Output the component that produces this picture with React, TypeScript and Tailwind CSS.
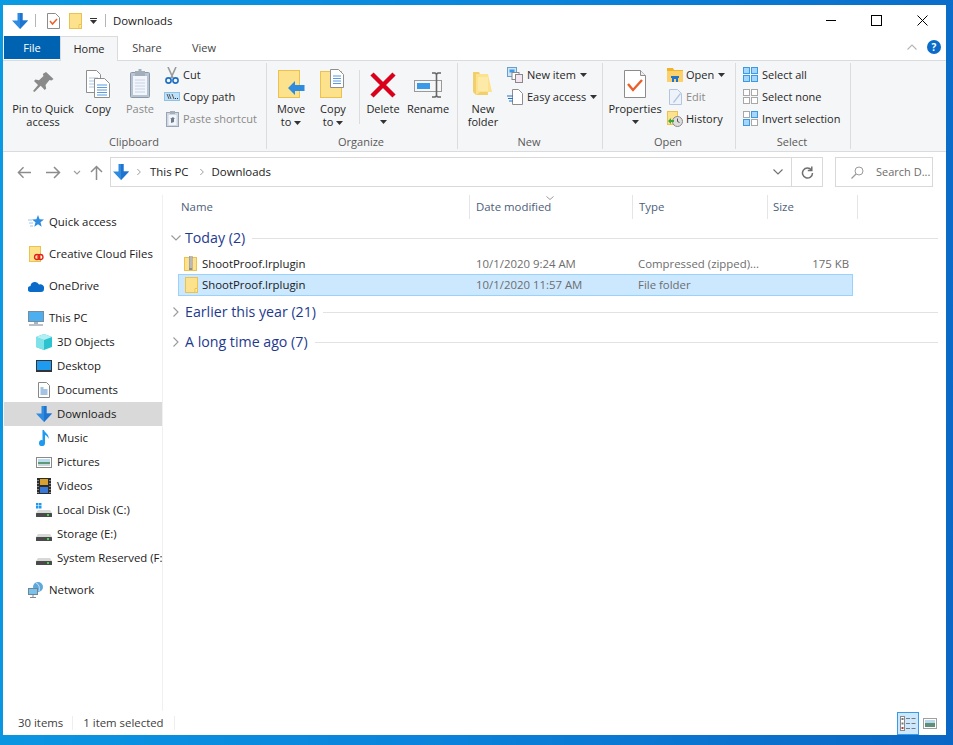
import React from "react";

type S = { s?: number };
const Svg = ({ w, h, children, className = "" }: { w: number; h: number; children: React.ReactNode; className?: string }) => (
  <svg width={w} height={h} viewBox={`0 0 ${w} ${h}`} className={`shrink-0 block ${className}`}>{children}</svg>
);

const DownArrow = ({ s = 16 }: S) => (
  <svg width={s} height={s} viewBox="0 0 16 16" className="shrink-0 block"><path d="M5.5 0h5v7.500H16L8 16 0 7.500h5.500z" fill="#2e8be0" /><path d="M8 0h2.500v7.500H16L8 16z" fill="#1f74cf" /></svg>
);
const Folder = ({ s = 16 }: S) => (
  <svg width={s} height={s} viewBox="0 0 16 16" className="shrink-0 block"><rect x="1.500" y=".5" width="12" height="15" fill="#fde28e" stroke="#ecc14e" /><path d="M11 15.500v-4h2.500" fill="#fff3c4" stroke="#ecc14e" /></svg>
);
const PropsSmall = () => (
  <Svg w={13} h={16}><path d="M.5.5h8l4 4v11H.5z" fill="#fff" stroke="#8c8c8c" /><path d="M3 8l2.500 3L10 6" fill="none" stroke="#e8602c" strokeWidth="1.500" /></Svg>
);
const Caret = ({ className = "" }: { className?: string }) => (
  <svg width="7" height="4" viewBox="0 0 7 4" className={`inline-block shrink-0 ${className}`}><path d="M0 0h7L3.500 4z" fill="#333" /></svg>
);
const Chevron = ({ dir = "down", c = "#9a9a9a", s = 12 }: { dir?: "down" | "right" | "up"; c?: string; s?: number }) => (
  <svg width={s} height={s} viewBox="0 0 12 12" className="shrink-0 block">
    <path d={dir === "down" ? "M1.500 3.500L6 8l4.500-4.500" : dir === "up" ? "M1.500 8.500L6 4l4.500 4.500" : "M3.500 1.500L8 6l-4.500 4.500"} fill="none" stroke={c} strokeWidth="1.100" />
  </svg>
);

/* ribbon big icons */
const PinIcon = () => (
  <Svg w={21} h={24} className="mb-[3px]"><path d="M13 1l7.500 7-2 1.500-2-.5-4 5 .7 3.500-1.500 1.500-4-4.200L1.500 21 0 20l5-6-4-4 1.500-1.500 3.500.7 4.500-4.200-.7-2z" fill="#8a8a8a" /></Svg>
);
const CopyIcon = () => (
  <Svg w={24} h={28}>
    <path d="M.5.5h10l4 4v18H.5z" fill="#fff" stroke="#8e8e8e" /><path d="M3 8h9M3 11h9M3 14h9M3 17h9" stroke="#a9c4e4" />
    <path d="M8.500 8.500h10l5 5v14h-15z" fill="#fff" stroke="#8e8e8e" /><path d="M11 15h10M11 17.500h10M11 20h10M11 22.500h10M11 25h10" stroke="#5b9ae0" strokeWidth="1.200" />
  </Svg>
);
const PasteIcon = () => (
  <Svg w={20} h={29}><rect x=".5" y="3.500" width="19" height="25" rx="1" fill="#b7c4d3" stroke="#8d98a6" /><rect x="3" y="7" width="14" height="19" fill="#f2f5fa" /><path d="M5 11h10M5 14h10M5 17h10M5 20h10M5 23h10" stroke="#c5d3e6" /><rect x="5" y="2" width="10" height="5" fill="#a3aebb" /><rect x="8.500" y="0" width="3" height="3" fill="#a3aebb" /></Svg>
);
const Scissors = () => (
  <Svg w={14} h={17}><path d="M3 0l5 11M11 0L6 11" stroke="#9a9a9a" strokeWidth="1.600" fill="none" /><circle cx="3.500" cy="13.500" r="2.600" fill="none" stroke="#1e6fc4" strokeWidth="1.600" /><circle cx="10.500" cy="13.500" r="2.600" fill="none" stroke="#1e6fc4" strokeWidth="1.600" /></Svg>
);
const CopyPath = () => (
  <Svg w={16} h={10}><rect x=".5" y=".5" width="15" height="8" fill="#bfe0f7" stroke="#8ec1e6" /><path d="M3 2l2 5M5 2l2 5M8 2l2 5" stroke="#333" strokeWidth=".8" /><path d="M11 6.500h1M13 6.500h1" stroke="#333" /></Svg>
);
const PasteShortcut = () => (
  <Svg w={13} h={16}><rect x=".5" y="1.500" width="12" height="14" fill="#cfd7e2" stroke="#9aa5b4" /><rect x="2.500" y="4" width="8" height="10" fill="#f2f5fa" /><rect x="4" y="0" width="5" height="3" fill="#a3aebb" /><path d="M5 12V8H4l3-2 2 2H8v3z" fill="#6d7a8a" /></Svg>
);
const MoveIcon = () => (
  <Svg w={27} h={28}><rect x=".5" y=".5" width="21" height="27" fill="#fde28e" stroke="#ecc14e" /><path d="M10 18l7-7v4h9.500v6H17v4z" fill="#2e8be0" /></Svg>
);
const CopyToIcon = () => (
  <Svg w={26} h={29}><rect x=".5" y="2.500" width="21" height="26" fill="#fde28e" stroke="#ecc14e" /><path d="M10.500.5h8l5 5v13h-13z" fill="#fff" stroke="#8e8e8e" /><path d="M13 7h8M13 9.500h8M13 12h8M13 14.500h8" stroke="#5b9ae0" /></Svg>
);
const DeleteIcon = () => (
  <Svg w={26} h={26}><path d="M2 2l22 22M24 2L2 24" stroke="#d8001b" strokeWidth="4.500" /></Svg>
);
const RenameIcon = () => (
  <Svg w={28} h={26}><rect x=".5" y="8.500" width="27" height="11" fill="#f6f6f6" stroke="#9a9a9a" /><rect x="3" y="11" width="13" height="6" fill="#3a9ae8" /><path d="M18 1h3l1.500 1L24 1h3M22.500 2v22M18 25h3l1.500-1 1.500 1h3" fill="none" stroke="#666" strokeWidth="1.600" /></Svg>
);
const NewFolderIcon = () => (
  <Svg w={20} h={27}><path d="M0 1h6l1 2h7l1 21H3l-3-3z" fill="#f3cf6c" /><path d="M3 3h12l4 18H7l-4 3z" fill="#fde28e" /><path d="M5 6h10v14H5z" fill="#fde9a8" /></Svg>
);
const NewItem = () => (
  <Svg w={16} h={16}><rect x=".5" y=".5" width="9" height="9" fill="#cfe6f8" stroke="#6b9ec8" /><rect x="2.500" y="2.500" width="5" height="3" fill="#3a9ae8" /><rect x="5" y="5.500" width="7" height="7" fill="#fff" stroke="#888" /><rect x="8.500" y="7.500" width="7" height="8" fill="#f4e6f0" stroke="#888" /></Svg>
);
const EasyAccess = () => (
  <Svg w={16} h={16}><path d="M5.500.5h6l4 4v11h-10z" fill="#fff" stroke="#8e8e8e" /><path d="M0 7h6M1 9.500h5M2 12h4" stroke="#1f74cf" strokeWidth="1.200" /></Svg>
);
const PropertiesIcon = () => (
  <Svg w={22} h={28}><path d="M.5.5h16l5 5v22H.5z" fill="#fff" stroke="#8c8c8c" /><path d="M16.500.5v5h5" fill="#eee" stroke="#8c8c8c" /><path d="M4 14l5 6 9-10" fill="none" stroke="#e8602c" strokeWidth="2.400" /></Svg>
);
const OpenIcon = () => (
  <Svg w={16} h={14}><path d="M0 0h6l1 2h9v12H0z" fill="#f0b429" /><rect y="3" width="16" height="11" fill="#fcd06a" /><path d="M5 14V9h6v5H9v-3H7v3z" fill="#1f74cf" /><rect x="4" y="8" width="8" height="2" fill="#1f74cf" /></Svg>
);
const EditIcon = () => (
  <Svg w={13} h={16}><path d="M.5.5h8l4 4v11H.5z" fill="#eef3fb" stroke="#b4c6de" /><path d="M4 13L11 4l1 1-7 9z" fill="#b4c6de" /></Svg>
);
const HistoryIcon = () => (
  <Svg w={16} h={16}><rect x=".5" y=".5" width="10" height="13" fill="#fde28e" stroke="#ecc14e" /><circle cx="10.500" cy="10.500" r="5" fill="#ddd" stroke="#888" /><path d="M10.500 7.500v3l2 1" stroke="#555" fill="none" /><path d="M1 10l3-3v2h3v2H4v2z" fill="#3aa83a" /></Svg>
);
const Grid4 = ({ mode }: { mode: "all" | "none" | "inv" }) => {
  const cell = (x: number, y: number, on: boolean) => (
    <rect key={`${x}${y}`} x={x + 0.5} y={y + 0.5} width="6" height="6" fill={on ? "#a8d6fa" : "#fff"} stroke={on ? "#3a9ae8" : "#a8a8a8"} />
  );
  const on = mode === "all" ? [1, 1, 1, 1] : mode === "none" ? [0, 0, 0, 0] : [0, 1, 1, 0];
  return <Svg w={16} h={16}>{cell(0, 0, !!on[0])}{cell(8, 0, !!on[1])}{cell(0, 8, !!on[2])}{cell(8, 8, !!on[3])}</Svg>;
};

/* sidebar icons */
const Star = () => (
  <Svg w={16} h={14}><path d="M10 0l1.600 4.300 4.400.2-3.500 2.800 1.200 4.500L10 9.300 6.300 11.800l1.200-4.500L4 4.500l4.400-.2z" fill="#2e8be0" /><path d="M0 5h4M1 8h4M2 11h3" stroke="#9ccaf2" /></Svg>
);
const CCFiles = () => (
  <Svg w={15} h={16}><rect x=".5" y=".5" width="11" height="15" fill="#fde28e" stroke="#ecc14e" /><circle cx="8" cy="11" r="2.500" fill="none" stroke="#e01f1f" strokeWidth="1.300" /><circle cx="11.500" cy="11" r="2.500" fill="none" stroke="#e01f1f" strokeWidth="1.300" /></Svg>
);
const Cloud = () => (
  <Svg w={16} h={11}><path d="M3 11a3 3 0 0 1-.5-6A4.500 4.500 0 0 1 11 3.500 3.800 3.800 0 0 1 16 8a3 3 0 0 1-3 3z" fill="#0a6cc8" /></Svg>
);
const Monitor = () => (
  <Svg w={16} h={15}><rect x=".5" y=".5" width="15" height="10" fill="#4cb0f0" stroke="#7b8b99" /><path d="M6 11h4v2H6z" fill="#a8b4bf" /><path d="M1 14h14" stroke="#8a96a1" strokeWidth="1.200" /></Svg>
);
const Cube = () => (
  <Svg w={16} h={16}><path d="M8 0l8 3v10l-8 3-8-3V3z" fill="#2cc2cf" /><path d="M8 6v10L0 13V3z" fill="#7ee2ea" /><path d="M8 0l8 3-8 3-8-3z" fill="#b4f0f3" /></Svg>
);
const Desktop = () => (
  <Svg w={16} h={12}><rect width="16" height="12" fill="#333" /><rect x="1" y="1" width="14" height="9" fill="#1e9af0" /></Svg>
);
const Docs = () => (
  <Svg w={12} h={16}><path d="M.5.5h8l3 3v12H.5z" fill="#fff" stroke="#888" /><path d="M2.500 6h3M2.500 8h7M2.500 10h7M2.500 12h7" stroke="#4a86c4" /></Svg>
);
const Music = () => (
  <Svg w={11} h={16}><path d="M3.500 0H5c.5 3 5.500 4 4.500 9-.5-2-2-3.500-3.500-4v8a3 3 0 1 1-2.500-2.800z" fill="#1e9af0" /></Svg>
);
const Pictures = () => (
  <Svg w={16} h={11}><rect x=".5" y=".5" width="15" height="10" fill="#fff" stroke="#8a8a8a" /><rect x="2" y="2" width="12" height="3" fill="#bcdcf2" /><rect x="2" y="5" width="12" height="2" fill="#5f9a78" /><rect x="2" y="7" width="12" height="2" fill="#c8d6dc" /></Svg>
);
const Videos = () => (
  <Svg w={14} h={16}><rect width="14" height="16" fill="#2c2c2c" /><rect x="3" y="1" width="8" height="6" fill="#d8a030" /><rect x="3" y="9" width="8" height="6" fill="#3878d8" /><path d="M1 2v1M1 5v1M1 8v1M1 11v1M1 14v1M13 2v1M13 5v1M13 8v1M13 11v1M13 14v1" stroke="#ddd" /></Svg>
);
const Disk = ({ win }: { win?: boolean }) => (
  <Svg w={16} h={14}>
    {win && <><rect width="2.500" height="2.500" y="0" x="0" fill="#1e9af0" /><rect width="2.500" height="2.500" x="3" y="0" fill="#1e9af0" /><rect width="2.500" height="2.500" x="0" y="3" fill="#1e9af0" /><rect width="2.500" height="2.500" x="3" y="3" fill="#1e9af0" /></>}
    <path d="M2 7h12l2 3H0z" fill="#d8d8d8" /><rect y="10" width="16" height="4" rx=".5" fill="#4a4a4a" /><rect x="11" y="11" width="2" height="2" fill="#4cd04c" />
  </Svg>
);
const Network = () => (
  <Svg w={16} h={16}><circle cx="10" cy="5" r="5" fill="#5fa8dc" /><path d="M8 1c3 1 4 5 3 8" stroke="#d5e8f6" fill="none" /><rect x=".5" y="6.500" width="9" height="6" fill="#7cc0ec" stroke="#6b8599" /><path d="M5 13v2M2 15.500h6" stroke="#7b8b99" /></Svg>
);
const ZipFolder = () => (
  <Svg w={14} h={16}><rect x=".5" y="1.500" width="12" height="13" fill="#fde28e" stroke="#ecc14e" /><rect x="5" y="0" width="3.500" height="14" fill="#8e8e8e" /><path d="M5.500 1H8M5.500 3H8M5.500 5H8M5.500 7H8M5.500 9H8M5.500 11H8" stroke="#e4e4e4" /></Svg>
);

const Large = ({ w, ml = 0, icon, lines, caret, disabled, caretLine }: {
  w: number; ml?: number; icon: React.ReactNode; lines: string[]; caret?: boolean; disabled?: boolean; caretLine?: boolean;
}) => (
  <div style={{ width: w, marginLeft: ml }} className={`flex flex-col items-center shrink-0 ${disabled ? "text-[#8a8a8a]" : "text-[#262626]"}`}>
    <div className="h-[35px] flex items-end justify-center">{icon}</div>
    <div className="mt-[4px] text-center leading-[13px] whitespace-nowrap">
      {lines.map((l, i) => (
        <div key={l}>{l}{caret && i === lines.length - 1 && <Caret className="ml-[3px] align-middle" />}</div>
      ))}
      {caretLine && <div className="flex justify-center h-[13px] items-center"><Caret /></div>}
    </div>
  </div>
);
const Small = ({ icon, label, caret, disabled, gap = 3 }: { icon: React.ReactNode; label: string; caret?: boolean; disabled?: boolean; gap?: number }) => (
  <div className={`h-[22px] flex items-center whitespace-nowrap ${disabled ? "text-[#8a8a8a]" : "text-[#262626]"}`}>
    <div className="w-[16px] flex justify-center">{icon}</div>
    <span style={{ marginLeft: gap }}>{label}</span>
    {caret && <Caret className="ml-[4px]" />}
  </div>
);
const Group = ({ w, label, children }: { w: number; label: string; children: React.ReactNode }) => (
  <div style={{ width: w }} className="shrink-0 flex flex-col">
    <div className="flex-1 flex border-r border-[#dcdcdc] h-[86px] mt-[2px] mb-[2px] relative">
      <div className="flex flex-1">{children}</div>
      <div className="absolute bottom-0 left-0 right-[2px] text-center text-[#595959] leading-[14px]">{label}</div>
    </div>
  </div>
);

const Row = ({ icon, label, child, active, mt = 0 }: { icon: React.ReactNode; label: string; child?: boolean; active?: boolean; mt?: number }) => (
  <div style={{ marginTop: mt }} className={`h-[24px] flex items-center whitespace-nowrap overflow-hidden text-[#1a1a1a] ${child ? "pl-[32px]" : "pl-[24px]"} ${active ? "bg-[#d9d9d9]" : ""}`}>
    <div className="w-[16px] flex justify-center shrink-0">{icon}</div>
    <span className="ml-[5px]">{label}</span>
  </div>
);

const GroupHead = ({ open, label, mt = 0 }: { open?: boolean; label: string; mt?: number }) => (
  <div style={{ marginTop: mt }} className="h-[30px] flex items-center pl-[7px] pr-[8px]">
    <Chevron dir={open ? "down" : "right"} c="#9a9a9a" s={12} />
    <span className="ml-[3px] text-[14.2px] text-[#1e3a8f] whitespace-nowrap">{label}</span>
    <div className="flex-1 h-px bg-[#e2e2e2] ml-[7px]" />
  </div>
);

const FileRow = ({ icon, name, date, type, size, sel }: { icon: React.ReactNode; name: string; date: string; type: string; size?: string; sel?: boolean }) => (
  <div className={`flex items-center h-[22px] ml-[15px] w-[675px] border text-[#1a1a1a] ${sel ? "bg-[#cce8ff] border-[#99d1ff]" : "border-transparent pt-[2px]"}`}>
    <div className="w-[23px] pl-[5px] shrink-0">{icon}</div>
    <div className="w-[274px] shrink-0">{name}</div>
    <div className="w-[162px] shrink-0 text-[#6d6d6d]">{date}</div>
    <div className="w-[135px] shrink-0 text-[#6d6d6d] whitespace-nowrap">{type}</div>
    <div className="w-[76px] shrink-0 text-right text-[#6d6d6d]">{size}</div>
  </div>
);

export default function App() {
  return (
    <div className="w-[953px] h-[745px] overflow-hidden pl-[3px] pt-[5px] pr-[7px] pb-[10px] bg-[linear-gradient(100deg,#0a9be3_0%,#0a84dc_50%,#0a66c4_100%)] font-['Open_Sans','Noto_Sans',sans-serif] text-[11.4px]">
      <div className="w-full h-full bg-white flex flex-col">
        {/* title bar */}
        <div className="h-[31px] flex items-center shrink-0">
          <div className="ml-[9px]"><DownArrow s={16} /></div>
          <div className="ml-[7px] w-px h-[13px] bg-[#b5b5b5]" />
          <div className="ml-[11px]"><PropsSmall /></div>
          <div className="ml-[8px]"><Folder s={16} /></div>
          <div className="ml-[6px] flex flex-col items-center w-[7px] gap-[1px]"><div className="w-[7px] h-px bg-[#333]" /><Caret /></div>
          <div className="ml-[8px] w-px h-[13px] bg-[#b5b5b5]" />
          <div className="ml-[7px] text-[11.4px] text-[#1a1a1a]">Downloads</div>
          <div className="ml-auto flex items-center mr-[18px] gap-[35px]">
            <div className="w-[10px] h-px bg-black" />
            <div className="w-[11px] h-[11px] border border-black" />
            <svg width="11" height="11" viewBox="0 0 11 11" className="block"><path d="M.5.5l10 10M10.500.5l-10 10" stroke="#000" /></svg>
          </div>
        </div>
        {/* tabs */}
        <div className="h-[24px] flex shrink-0 relative text-[#444] leading-[23px] pl-px text-[11px]">
          <div className="w-[56px] h-[23px] bg-[#0063b1] text-white text-center">File</div>
          <div className="w-[58px] h-[25px] bg-[#f5f6f7] border border-b-0 border-[#dadbdc] text-center text-[#262626] z-10">Home</div>
          <div className="w-[58px] text-center">Share</div>
          <div className="w-[56px] text-center">View</div>
          <div className="ml-auto flex items-center mr-[5px] gap-[9px] -mt-[2px]">
            <Chevron dir="up" c="#b5b5b5" s={12} />
            <div className="w-[14px] h-[14px] rounded-full bg-[#0a6cc8] text-white font-bold text-[10px] leading-[14px] text-center">?</div>
          </div>
        </div>
        {/* ribbon */}
        <div className="h-[92px] shrink-0 bg-[#f5f6f7] border-y border-[#dadbdc] flex pl-px text-[11px]">
          <Group w={263} label="Clipboard">
            <Large w={72} ml={3} icon={<PinIcon />} lines={["Pin to Quick", "access"]} />
            <Large w={38} ml={0} icon={<CopyIcon />} lines={["Copy"]} />
            <Large w={38} ml={4} icon={<PasteIcon />} lines={["Paste"]} disabled />
            <div className="ml-[5px] flex flex-col mt-[1px]">
              <Small icon={<Scissors />} label="Cut" />
              <Small icon={<CopyPath />} label="Copy path" />
              <Small icon={<PasteShortcut />} label="Paste shortcut" disabled />
            </div>
          </Group>
          <Group w={191} label="Organize">
            <Large w={42} ml={3} icon={<MoveIcon />} lines={["Move", "to"]} caret />
            <Large w={42} icon={<CopyToIcon />} lines={["Copy", "to"]} caret />
            <div className="w-px h-[54px] bg-[#dcdcdc] mt-[7px] ml-[5px]" />
            <Large w={46} ml={0} icon={<DeleteIcon />} lines={["Delete"]} caretLine />
            <Large w={44} icon={<RenameIcon />} lines={["Rename"]} />
          </Group>
          <Group w={145} label="New">
            <Large w={48} ml={1} icon={<NewFolderIcon />} lines={["New", "folder"]} />
            <div className="flex flex-col mt-[1px]">
              <Small icon={<NewItem />} label="New item" caret gap={4} />
              <Small icon={<EasyAccess />} label="Easy access" caret gap={4} />
            </div>
          </Group>
          <Group w={133} label="Open">
            <Large w={60} ml={2} icon={<PropertiesIcon />} lines={["Properties"]} caretLine />
            <div className="flex flex-col mt-[1px] ml-[2px]">
              <Small icon={<OpenIcon />} label="Open" caret />
              <Small icon={<EditIcon />} label="Edit" disabled />
              <Small icon={<HistoryIcon />} label="History" />
            </div>
          </Group>
          <Group w={115} label="Select">
            <div className="flex flex-col mt-[1px] ml-[7px]">
              <Small icon={<Grid4 mode="all" />} label="Select all" />
              <Small icon={<Grid4 mode="none" />} label="Select none" />
              <Small icon={<Grid4 mode="inv" />} label="Invert selection" />
            </div>
          </Group>
        </div>
        {/* nav */}
        <div className="h-[43px] shrink-0 flex items-start pt-[5px]">
          <div className="ml-[14px] mt-[7px] flex items-center h-[16px]">
            <svg width="14" height="13" viewBox="0 0 15 13" className="block"><path d="M15 6.500H1.500M7 1L1.500 6.500 7 12" fill="none" stroke="#8c8c8c" strokeWidth="1.500" /></svg>
            <svg width="15" height="13" viewBox="0 0 15 13" className="block ml-[15px]"><path d="M0 6.500h13.500M8 1l5.500 5.500L8 12" fill="none" stroke="#8c8c8c" strokeWidth="1.500" /></svg>
            <svg width="8" height="5" viewBox="0 0 8 5" className="block ml-[12px]"><path d="M1 1l3 3 3-3" fill="none" stroke="#a0a0a0" strokeWidth="1.200" /></svg>
            <svg width="13" height="15" viewBox="0 0 13 15" className="block ml-[9px]"><path d="M6.500 15V1.500M1 7l5.500-5.500L12 7" fill="none" stroke="#8c8c8c" strokeWidth="1.500" /></svg>
          </div>
          <div className="ml-[7px] w-[713px] h-[30px] border border-[#d9d9d9] flex items-center text-[#1a1a1a]">
            <div className="ml-[2px]"><DownArrow s={16} /></div>
            <div className="ml-[6px]"><Chevron dir="right" c="#7a7a7a" s={8} /></div>
            <span className="ml-[7px]">This PC</span>
            <div className="ml-[9px]"><Chevron dir="right" c="#7a7a7a" s={8} /></div>
            <span className="ml-[6px]">Downloads</span>
            <div className="ml-auto mr-[7px]"><Chevron dir="down" c="#707070" s={12} /></div>
            <div className="w-[31px] h-full border-l border-[#d9d9d9] flex items-center justify-center">
              <svg width="13" height="13" viewBox="0 0 13 13" className="block"><path d="M10.500 4A5 5 0 1 0 11.500 7M10.800.5v4h-4" fill="none" stroke="#707070" strokeWidth="1.500" /></svg>
            </div>
          </div>
          <div className="ml-[12px] w-[98px] h-[30px] border border-[#d9d9d9] flex items-center text-[#6d6d6d]">
            <svg width="13" height="13" viewBox="0 0 13 13" className="block ml-[15px]"><circle cx="8" cy="5" r="4" fill="none" stroke="#9a9a9a" /><path d="M5 8l-4.500 4.500" stroke="#9a9a9a" strokeWidth="1.200" /></svg>
            <span className="ml-[12px] whitespace-nowrap text-[11px]">Search D...</span>
          </div>
        </div>
        {/* body */}
        <div className="flex-1 flex min-h-0">
          <div className="w-[160px] shrink-0 border-r border-[#f0f0f0] pt-[15px] pl-px overflow-hidden">
            <Row icon={<Star />} label="Quick access" />
            <Row icon={<CCFiles />} label="Creative Cloud Files" mt={8} />
            <Row icon={<Cloud />} label="OneDrive" mt={8} />
            <Row icon={<Monitor />} label="This PC" mt={8} />
            <Row icon={<Cube />} label="3D Objects" child />
            <Row icon={<Desktop />} label="Desktop" child />
            <Row icon={<Docs />} label="Documents" child />
            <Row icon={<DownArrow s={16} />} label="Downloads" child active />
            <Row icon={<Music />} label="Music" child />
            <Row icon={<Pictures />} label="Pictures" child />
            <Row icon={<Videos />} label="Videos" child />
            <Row icon={<Disk win />} label="Local Disk (C:)" child />
            <Row icon={<Disk />} label="Storage (E:)" child />
            <Row icon={<Disk />} label="System Reserved (F:" child />
            <Row icon={<Network />} label="Network" mt={8} />
          </div>
          <div className="flex-1 min-w-0">
            <div className="h-[24px] flex text-[#4c607a] leading-[24px]">
              <div className="w-[307px] pl-[18px] border-r border-[#e5e5e5]">Name</div>
              <div className="w-[163px] pl-[6px] border-r border-[#e5e5e5] relative">Date modified
                <svg width="8" height="4" viewBox="0 0 8 4" className="absolute left-[76px] top-[1px]"><path d="M.5.500L4 3.500 7.500.500" fill="none" stroke="#9a9a9a" /></svg>
              </div>
              <div className="w-[135px] pl-[6px] border-r border-[#e5e5e5]">Type</div>
              <div className="w-[90px] pl-[5px] border-r border-[#e5e5e5]">Size</div>
            </div>
            <GroupHead open label="Today (2)" mt={4} />
            <div className="-mt-[1px]">
              <FileRow icon={<ZipFolder />} name="ShootProof.lrplugin" date="10/1/2020 9:24 AM" type="Compressed (zipped)..." size="175 KB" />
              <FileRow icon={<Folder s={16} />} name="ShootProof.lrplugin" date="10/1/2020 11:57 AM" type="File folder" sel />
            </div>
            <GroupHead label="Earlier this year (21)" mt={1} />
            <GroupHead label="A long time ago (7)" />
          </div>
        </div>
        {/* status */}
        <div className="h-[24px] shrink-0 flex items-center text-[#404040] relative">
          <span className="ml-[15px]">30 items</span>
          <div className="ml-[9px] w-px h-[14px] bg-[#eeeeee]" />
          <span className="ml-[10px]">1 item selected</span>
          <div className="ml-[10px] w-px h-[14px] bg-[#eeeeee]" />
          <div className="ml-auto mr-[9px] flex items-center">
            <div className="w-[22px] h-[23px] bg-[#cce8ff] border border-[#3a9ae8] flex items-center justify-center">
              <svg width="16" height="15" viewBox="0 0 16 15" className="block"><rect x=".5" y=".5" width="4" height="14" fill="#fff" stroke="#8a8a8a" /><rect x="1.500" y="2" width="2" height="2" fill="#777" /><rect x="1.500" y="6.500" width="2" height="2" fill="#777" /><rect x="1.500" y="11" width="2" height="2" fill="#c0392b" /><path d="M6 2.500h4M11.500 2.500h4M6 7.500h4M11.500 7.500h4M6 12.500h4M11.500 12.500h4" stroke="#7a7a7a" strokeWidth="1.200" /></svg>
            </div>
            <svg width="14" height="11" viewBox="0 0 14 11" className="block ml-[4px]"><rect x=".5" y=".5" width="13" height="10" fill="#fff" stroke="#a0a0a0" /><rect x="2" y="2" width="10" height="3" fill="#b8d8ee" /><rect x="2" y="5" width="10" height="4" fill="#5f8f78" /></svg>
          </div>
        </div>
      </div>
    </div>
  );
}
